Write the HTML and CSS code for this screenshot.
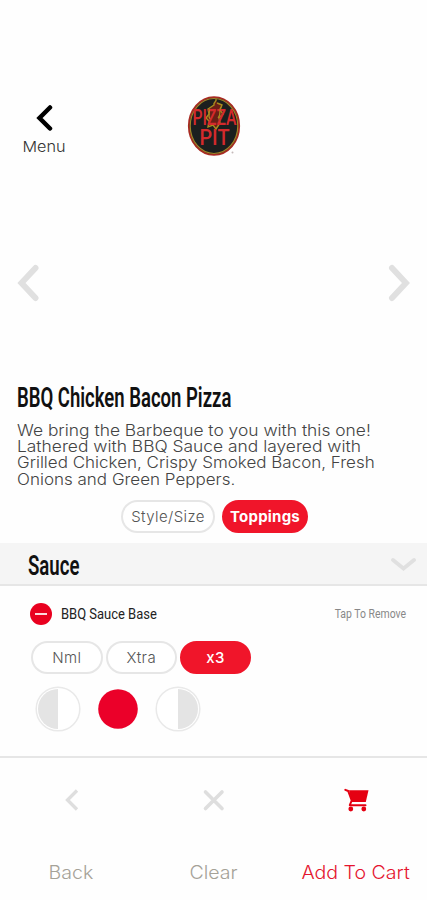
FILE: index.html
```
<!DOCTYPE html>
<html lang="en">
<head>
<meta charset="utf-8">
<title>BBQ Chicken Bacon Pizza</title>
<link rel="stylesheet" href="styles.css">
</head>
<body>
<header class="top">
  <div class="menu">
    <svg width="18" height="28" viewBox="0 0 18 28"><path d="M15 3.500 4.500 14 15 24.500" fill="none" stroke="#000" stroke-width="4.500" stroke-linecap="round"/></svg>
    <span class="menu-label">Menu</span>
  </div>
  <svg class="logo" width="54" height="62" viewBox="0 0 54 62">
    <ellipse cx="27" cy="31" rx="25.2" ry="28.900" fill="#1b1f1f" stroke="#a82a22" stroke-width="1.800"/>
    <ellipse cx="27" cy="31" rx="23.800" ry="27.500" fill="none" stroke="#a08428" stroke-width="1.200"/>
    <path d="M29 4c1 3-3 3-2 6l-6 4 1 5-3 4 3 3-1 6 5-2 3 4 4-6-1-5 4-4-3-4 2-5-5-2" fill="#6b1f17" stroke="#a98b1f" stroke-width="1.400"/>
    <text class="logo-text" x="5.500" y="30" textLength="44" lengthAdjust="spacingAndGlyphs">PIZZA</text>
    <text class="logo-text" x="12.500" y="49.500" textLength="30" lengthAdjust="spacingAndGlyphs">PIT</text>
    <path d="M22 14c2 4-2 6 1 10M34 12c-3 4 1 7-3 11" fill="none" stroke="#a98b1f" stroke-width="1.200"/>
    <circle cx="45.500" cy="57.500" r="1" fill="#c4b9b9"/>
  </svg>
</header>
<section class="carousel">
  <svg width="22" height="38" viewBox="0 0 22 38"><path d="M18.500 4 4.500 19 18.500 34" fill="none" stroke="#e0e0e0" stroke-width="6" stroke-linecap="round"/></svg>
  <svg width="22" height="38" viewBox="0 0 22 38"><path d="M4 4 18 19 4 34" fill="none" stroke="#e0e0e0" stroke-width="6" stroke-linecap="round"/></svg>
</section>
<section class="info">
  <h1 class="title">BBQ Chicken Bacon Pizza</h1>
  <p class="desc"><span class="wide">We bring the Barbeque to you with this one!</span><span class="wide">Lathered with BBQ Sauce and layered with</span><span class="mid">Grilled Chicken, Crispy Smoked Bacon, Fresh</span><span class="mid">Onions and Green Peppers.</span></p>
</section>
<nav class="tabs">
  <span class="pill style-size">Style/Size</span>
  <span class="pill active toppings">Toppings</span>
</nav>
<section class="group">
  <h2 class="group-name">Sauce</h2>
  <svg width="26" height="16" viewBox="0 0 26 16"><path d="M3 4 13.500 12.500 24 4" fill="none" stroke="#e0e0e0" stroke-width="3.800" stroke-linecap="round"/></svg>
</section>
<section class="item">
  <div class="item-head">
    <svg width="22" height="22" viewBox="0 0 22 22"><circle cx="11" cy="11" r="11" fill="#e9001f"/><path d="M5 11h12" stroke="#fff" stroke-width="1.700"/></svg>
    <span class="item-name">BBQ Sauce Base</span>
    <span class="remove">Tap To Remove</span>
  </div>
  <div class="amounts">
    <span class="pill amount">Nml</span>
    <span class="pill amount">Xtra</span>
    <span class="pill amount active">x3</span>
  </div>
  <div class="sides">
    <svg width="46" height="46" viewBox="0 0 46 46"><circle cx="23" cy="23" r="21.800" fill="#fff" stroke="#e9e9e9" stroke-width="1.500"/><path d="M23 3a20 20 0 0 0 0 40z" fill="#e4e4e4"/></svg>
    <svg width="40" height="40" viewBox="0 0 40 40"><circle cx="20" cy="20" r="19.800" fill="#eb0029"/></svg>
    <svg width="46" height="46" viewBox="0 0 46 46"><circle cx="23" cy="23" r="21.800" fill="#fff" stroke="#e9e9e9" stroke-width="1.500"/><path d="M23 3a20 20 0 0 1 0 40z" fill="#e4e4e4"/></svg>
  </div>
</section>
<footer class="actions">
  <div class="action">
    <svg width="26" height="26" viewBox="0 0 26 26"><path d="M19 3.500 9.500 13 19 22.500" fill="none" stroke="#dedede" stroke-width="3.300"/></svg>
    <span>Back</span>
  </div>
  <div class="action">
    <svg width="26" height="26" viewBox="0 0 26 26"><path d="M5.500 5 22 21.500M22 5 5.500 21.500" fill="none" stroke="#dedede" stroke-width="3.600" stroke-linecap="round"/></svg>
    <span>Clear</span>
  </div>
  <div class="action cart">
    <svg width="26" height="26" viewBox="0 0 26 26"><path d="M6 3.200H25.500L22.800 15H8.500Z" fill="#e50012"/><path d="M2.300 2.800 5.200 4 8.700 13.500 6.800 18.200H22.500" fill="none" stroke="#e50012" stroke-width="2" stroke-linejoin="round" stroke-linecap="round"/><circle cx="7.800" cy="22" r="2.400" fill="#e50012"/><circle cx="20.800" cy="22" r="2.400" fill="#e50012"/></svg>
    <span>Add To Cart</span>
  </div>
</footer>
</body>
</html>
```
FILE: styles.css
```
* { box-sizing: border-box; }
body { margin: 0; width: 427px; height: 900px; overflow: hidden; background: #fefefe; font-family: Inter, "Open Sans", sans-serif; font-weight: 300; }
svg { display: block; flex: none; }
h1, h2, p { margin: 0; }
.top { height: 170px; padding: 95px 0 0 22px; display: flex; align-items: flex-start; }
.menu { width: 44px; padding-top: 9px; display: flex; flex-direction: column; align-items: center; }
.menu-label { margin-top: 6px; font-size: 15px; line-height: 18px; color: #333; transform: scaleX(1.08); }
.logo { margin-left: 121px; overflow: visible; }
.logo-text { font-family: Roboto, sans-serif; font-size: 22.500px; font-weight: 500; fill: #d42a2c; }
.carousel { height: 209px; padding: 94px 17px 0; display: flex; justify-content: space-between; }
.info { height: 121px; padding: 2px 0 0 17px; }
.title { width: max-content; font-family: Roboto, sans-serif; font-size: 28px; line-height: 34px; font-weight: 600; color: #111; transform: scaleX(.661); transform-origin: 0 0; }
.desc { margin-top: 8px; display: flex; flex-direction: column; align-items: flex-start; font-size: 15.500px; line-height: 16.200px; color: #444; white-space: nowrap; }
.desc span { transform-origin: 0 0; }
.wide { transform: scaleX(1.122); }
.mid { transform: scaleX(1.097); }
.tabs { height: 43px; padding-left: 121px; display: flex; gap: 7px; align-items: flex-start; }
.pill { height: 33px; border: 2px solid #e6e6e6; border-radius: 17px; background: #fff; color: #555; font-size: 15px; display: flex; align-items: center; justify-content: center; letter-spacing: .4px; }
.active { background: #f0152a; border-color: #f0152a; color: #fff; font-weight: 500; }
.style-size { width: 94px; }
.toppings { width: 86px; font-weight: 700; letter-spacing: .2px; }
.group { height: 43px; padding: 0 11px 0 28px; display: flex; justify-content: space-between; align-items: center; background: #f5f5f5; border-bottom: 2px solid #e6e6e6; }
.group-name { padding-top: 4px; font-family: Roboto, sans-serif; font-size: 28px; line-height: 34px; font-weight: 600; color: #111; transform: scaleX(.665); transform-origin: 0 0; }
.item { height: 170px; padding-top: 17px; }
.item-head { height: 22px; padding: 0 21px 0 30px; display: flex; align-items: center; font-family: Roboto, sans-serif; font-weight: 400; }
.item-name { margin-left: 9px; font-size: 15px; color: #222; transform: scaleX(.865); transform-origin: 0 50%; }
.remove { margin-left: auto; font-size: 12px; color: #888; transform: scaleX(.87); transform-origin: 100% 50%; }
.amounts { margin-top: 16px; padding-left: 31px; display: flex; gap: 3px; }
.amount { width: 71.500px; }
.amount.active { width: 71px; }
.sides { margin-top: 12px; padding-left: 35px; display: flex; align-items: center; gap: 17px; }
.actions { height: 144px; border-top: 2px solid #e6e6e6; display: grid; grid-template-columns: repeat(3, 1fr); }
.action { padding-top: 29px; display: flex; flex-direction: column; align-items: center; font-size: 18.300px; line-height: 22px; color: #a5a298; white-space: nowrap; }
.action span { margin-top: 48px; transform: scaleX(1.07); }
.cart { color: #e5152f; }
```
